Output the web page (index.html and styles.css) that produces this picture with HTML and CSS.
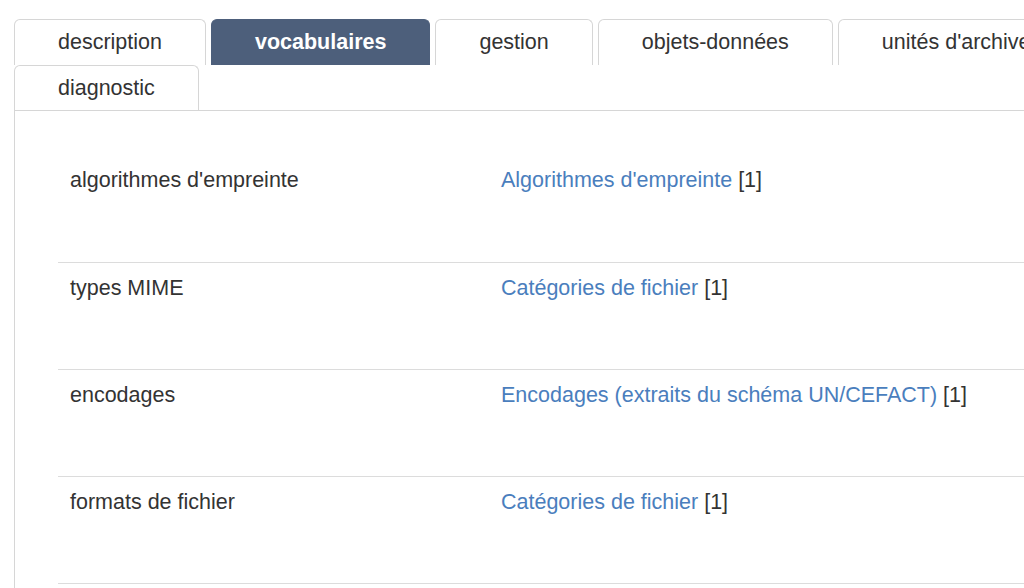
FILE: index.html
```html
<!DOCTYPE html>
<html lang="fr">
<head>
<meta charset="utf-8">
<title>vocabulaires</title>
<link rel="stylesheet" href="styles.css">
</head>
<body>
<div class="wrap">
  <ul class="tabs">
    <li class="tab">description</li>
    <li class="tab active">vocabulaires</li>
    <li class="tab">gestion</li>
    <li class="tab">objets-données</li>
    <li class="tab">unités d'archive</li>
    <li class="tab">diagnostic</li>
  </ul>
  <div class="panel">
    <table class="props">
      <tr>
        <td class="label">algorithmes d'empreinte</td>
        <td class="value"><a href="#">Algorithmes d'empreinte</a> [1]</td>
      </tr>
      <tr>
        <td class="label">types MIME</td>
        <td class="value"><a href="#">Catégories de fichier</a> [1]</td>
      </tr>
      <tr>
        <td class="label">encodages</td>
        <td class="value"><a href="#">Encodages (extraits du schéma UN/CEFACT)</a> [1]</td>
      </tr>
      <tr>
        <td class="label">formats de fichier</td>
        <td class="value"><a href="#">Catégories de fichier</a> [1]</td>
      </tr>
      <tr>
        <td class="label">&nbsp;</td>
        <td class="value">&nbsp;</td>
      </tr>
    </table>
  </div>
</div>
</body>
</html>
```

FILE: styles.css
```css
html, body {
  margin: 0;
  padding: 0;
  background: #fff;
  overflow: hidden;
}
body {
  font-family: "Liberation Sans", Arial, Helvetica, sans-serif;
  font-size: 21.5px;
  color: #333;
}
.wrap {
  width: 1150px;
  padding: 19px 0 0 14px;
}
.tabs {
  list-style: none;
  margin: 0 0 -1px 0;
  padding: 0;
  display: flex;
  flex-wrap: wrap;
  column-gap: 5px;
}
.tab {
  box-sizing: border-box;
  height: 46px;
  line-height: 45px;
  padding: 0 43px;
  border: 1px solid #d6d6d6;
  border-bottom: none;
  border-radius: 6px 6px 0 0;
  background: #fff;
  color: #333;
  white-space: nowrap;
  text-align: center;
}
.tab.active {
  background: #4d5f7b;
  border-color: #4d5f7b;
  color: #fff;
  font-weight: bold;
}
.panel {
  position: relative;
  border: 1px solid #d6d6d6;
  padding: 44px 43px;
  background: #fff;
}
.props {
  border-collapse: collapse;
  width: 100%;
}
.props td {
  height: 107px;
  box-sizing: border-box;
  padding: 10px 12px;
  vertical-align: top;
  line-height: 30px;
  border-bottom: 1px solid #dcdcdc;
}
.props td.label {
  width: 431px;
}
.props a {
  color: #4a7ebd;
  text-decoration: none;
}
```
